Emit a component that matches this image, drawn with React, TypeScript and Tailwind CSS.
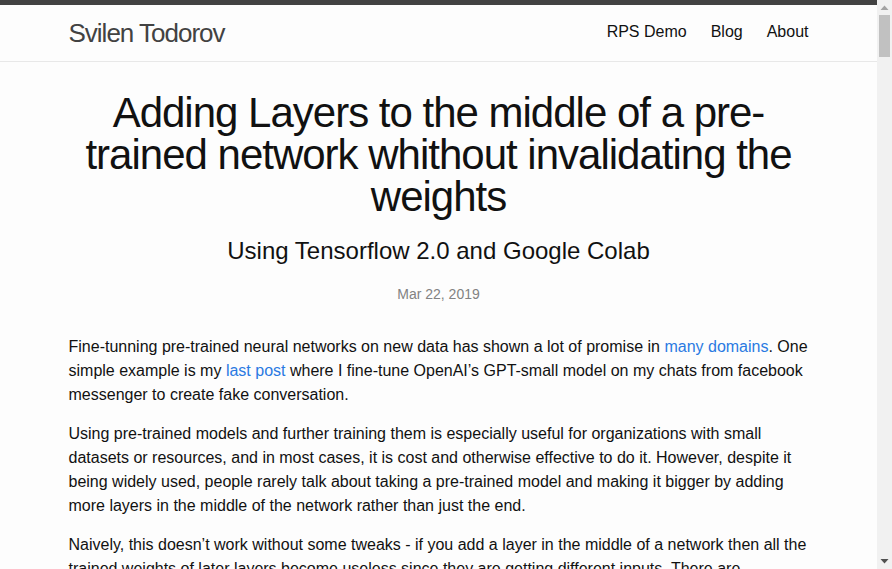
import React from "react";

function ScrollBar() {
  return (
    <div className="w-[15px] shrink-0 h-full bg-[#f1f1f1] flex flex-col items-center">
      <div className="h-[15px] w-full flex items-center justify-center">
        <svg width="9" height="5" viewBox="0 0 9 5">
          <polygon points="0.5,5 4.5,0.5 8.5,5" fill="#a3a3a3" />
        </svg>
      </div>
      <div className="w-[11px] h-[42px] bg-[#c1c1c1]" />
      <div className="flex-1" />
      <div className="h-[15px] w-full flex items-center justify-center">
        <svg width="9" height="5" viewBox="0 0 9 5">
          <polygon points="0.5,0 8.5,0 4.5,4.5" fill="#505050" />
        </svg>
      </div>
    </div>
  );
}

export default function App() {
  return (
    <div
      className="h-screen flex bg-[#fdfdfd] text-[#111] text-[16px] leading-[24px]"
      style={{ fontFamily: '"Liberation Sans", Arial, sans-serif' }}
    >
      <div className="flex-1 min-w-0 overflow-hidden">
        <header className="border-t-[5px] border-t-[#424242] border-b border-b-[#e8e8e8] min-h-[56px]">
          <div className="max-w-[800px] mx-auto px-[30px] flex justify-between items-start">
            <a className="text-[26px] leading-[56px] tracking-[-1px] text-[#424242]">Svilen Todorov</a>
            <nav className="flex gap-6 leading-[54px] text-[#111]">
              <a>RPS Demo</a>
              <a>Blog</a>
              <a>About</a>
            </nav>
          </div>
        </header>
        <main className="py-[30px]">
          <div className="max-w-[800px] mx-auto px-[30px]">
            <article>
              <header className="mb-[30px] text-center">
                <h1 className="text-[42px] leading-none tracking-[-1px] mb-[15px]">
                  Adding Layers to the middle of a pre-trained network whithout invalidating the weights
                </h1>
                <h2 className="text-[24px] leading-[36px] mb-[15px]">Using Tensorflow 2.0 and Google Colab</h2>
                <p className="text-[14px] leading-[21px] text-[#828282]">Mar 22, 2019</p>
              </header>
              <div>
                <p className="mb-[15px]">
                  Fine-tunning pre-trained neural networks on new data has shown a lot of promise in{" "}
                  <a className="text-[#2a7ae2]">many domains</a>. One simple example is my{" "}
                  <a className="text-[#2a7ae2]">last post</a> where I fine-tune OpenAI’s GPT-small model on my
                  chats from facebook messenger to create fake conversation.
                </p>
                <p className="mb-[15px]">
                  Using pre-trained models and further training them is especially useful for organizations with
                  small datasets or resources, and in most cases, it is cost and otherwise effective to do it.
                  However, despite it being widely used, people rarely talk about taking a pre-trained model and
                  making it bigger by adding more layers in the middle of the network rather than just the end.
                </p>
                <p className="mb-[15px]">
                  Naively, this doesn’t work without some tweaks - if you add a layer in the middle of a network
                  then all the trained weights of later layers become useless since they are getting different
                  inputs. There are, however, a few simple tricks that let us add new layers while keeping the
                  output of the network exactly the same as before we started training.
                </p>
              </div>
            </article>
          </div>
        </main>
      </div>
      <ScrollBar />
    </div>
  );
}
